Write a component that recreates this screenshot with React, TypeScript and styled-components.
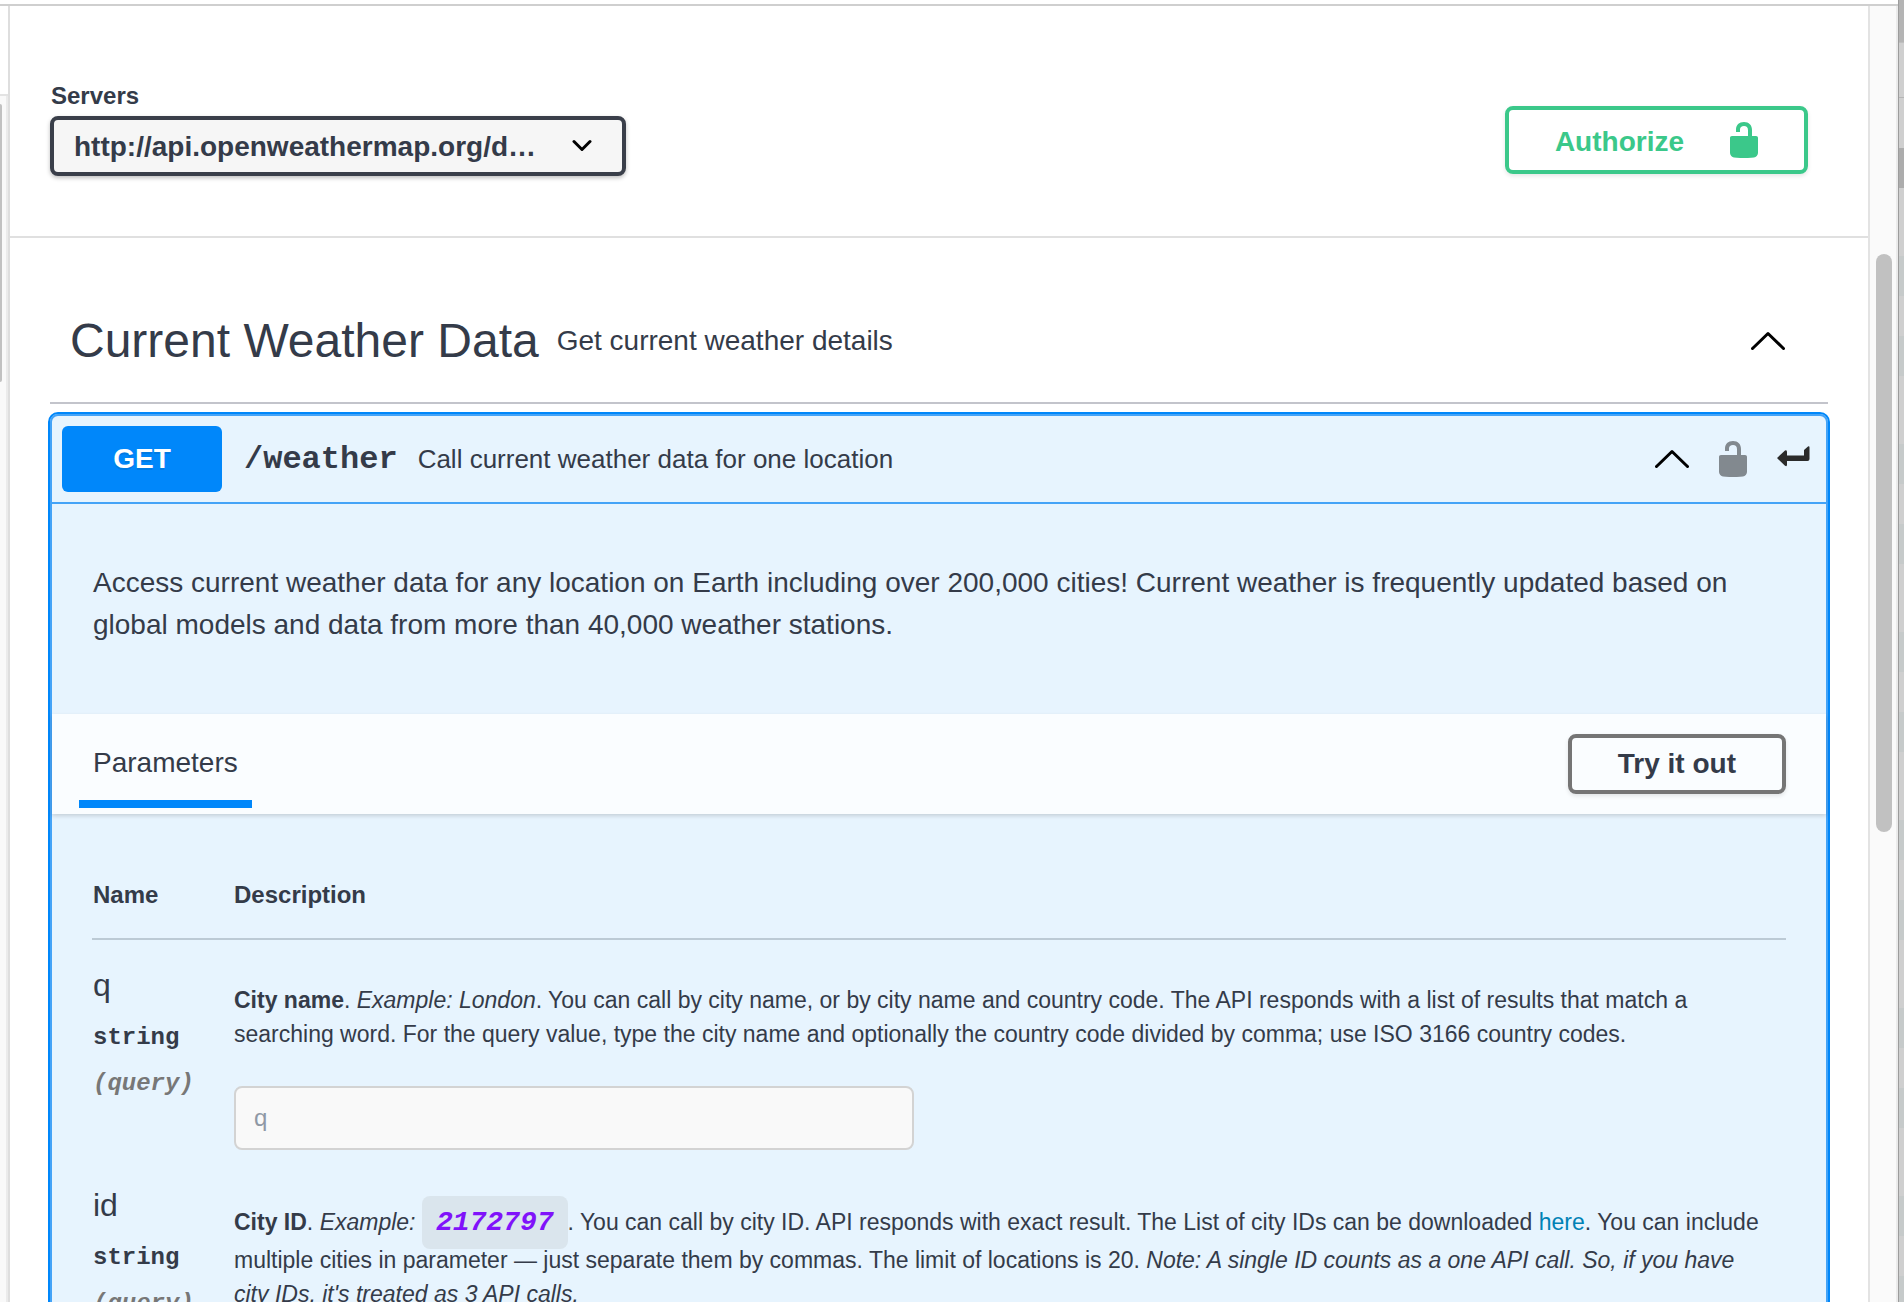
import React from "react";
import styled, { createGlobalStyle, css } from "styled-components";

const sans = `"Liberation Sans", Arial, Helvetica, sans-serif`;
const mono = `"Liberation Mono", "Courier New", monospace`;
const ink = "#343b49";
const blue = "#0087fa";
const green = "#3bc88a";

const GlobalStyle = createGlobalStyle`
  *, *::before, *::after { box-sizing: border-box; }
  html, body, #root { height: 100%; }
  body { margin: 0; overflow: hidden; background: #fff; color: ${ink}; font-family: ${sans}; }
`;

const Window = styled.div`
  display: grid;
  grid-template-columns: 1fr 6px;
  height: 100vh;
  overflow: hidden;
`;

const Browser = styled.div`
  display: flex;
  flex-direction: column;
  min-width: 0;
  min-height: 0;
`;

const TopEdge = styled.div`
  flex: none;
  height: 6px;
  border-bottom: 2px solid #cfcfcf;
`;

const Panes = styled.div`
  flex: 1;
  display: grid;
  grid-template-columns: 10px minmax(0, 1fr) 30px;
  min-height: 0;
`;

const SidePane = styled.div`
  display: flex;
  flex-direction: column;
  border-right: 2px solid #dedede;
`;

const SideHeader = styled.div`
  height: 90px;
  border-bottom: 2px solid #e3e3e3;
`;

const SideTrack = styled.div`
  flex: 1;
  padding-top: 8px;
  background: #f9f9f9;
  border-right: 2px solid #ebebeb;
`;

const SideThumb = styled.div`
  width: 2px;
  height: 278px;
  background: #c1c1c1;
  border-radius: 0 2px 2px 0;
`;

const Track = styled.div`
  padding: 248px 4px 0 6px;
  background: #fafafa;
  border-left: 2px solid #e3e3e3;
  border-right: 2px solid #ebebeb;
`;

const Thumb = styled.div`
  height: 578px;
  border-radius: 8px;
  background: #c1c1c1;
`;

const Backdrop = styled.div`
  border-left: 1px solid #9c9c9c;
  background:
    linear-gradient(#b4b4b4 0 42px, #bebebe 42px 43px, #cfcfcf 43px 97px, #b5b5b5 97px 98px, #cfcfcf 98px 148px, #acacac 148px 188px, transparent 188px),
    repeating-linear-gradient(#cfcfcf 0 28px, #cfcfcf 28px 68px, #c6caca 68px 108px, #cfcfcf 108px 148px, #c6caca 148px 188px);
`;

const Page = styled.main`
  min-width: 0;
  overflow: hidden;
`;

const Schemes = styled.section`
  display: flex;
  align-items: flex-start;
  justify-content: space-between;
  height: 232px;
  padding: 74px 60px 0 40px;
  border-bottom: 2px solid #e0e0e0;
`;

const ServerField = styled.div`
  display: flex;
  flex-direction: column;
  width: 576px;
`;

const ServerLabel = styled.label`
  margin-bottom: 4px;
  padding-left: 1px;
  font-size: 24px;
  font-weight: 700;
  line-height: 32px;
`;

const SelectBox = styled.div`
  display: grid;
  align-items: center;

  & > * { grid-area: 1 / 1; }
  & > svg { justify-self: end; margin-right: 34px; pointer-events: none; }
`;

const Select = styled.select`
  appearance: none;
  width: 100%;
  height: 60px;
  padding: 0 84px 0 20px;
  border: 4px solid #3a3f4a;
  border-radius: 8px;
  background: #f6f6f6;
  box-shadow: 0 2px 4px rgba(0, 0, 0, 0.25);
  color: ${ink};
  font: 700 28px ${sans};
  text-overflow: ellipsis;
`;

const Button = styled.button<{ $tone: "authorize" | "plain" }>`
  display: flex;
  align-items: center;
  justify-content: center;
  height: 60px;
  padding: 0 46px;
  border: 4px solid #757575;
  border-radius: 8px;
  background: transparent;
  box-shadow: 0 2px 4px rgba(0, 0, 0, 0.1);
  color: ${ink};
  font: 700 28px ${sans};
  ${(p) =>
    p.$tone === "authorize" &&
    css`
      gap: 46px;
      height: 68px;
      margin-top: 26px;
      border-color: ${green};
      color: ${green};
    `}
`;

const ButtonLabel = styled.span`
  padding-top: 4px;
`;

const Body = styled.section`
  padding: 54px 40px 0;
`;

const TagHeader = styled.header`
  display: flex;
  align-items: center;
  height: 112px;
  padding: 0 43px 12px 20px;
  border-bottom: 2px solid #c3c4cb;
`;

const TagTitle = styled.h2`
  margin: 0;
  font-size: 48px;
  font-weight: 400;
  line-height: 64px;
`;

const TagText = styled.p`
  flex: 1;
  margin: 0;
  padding-left: 18px;
  font-size: 28px;
  line-height: 42px;
`;

const IconButton = styled.button`
  display: flex;
  padding: 0;
  border: 0;
  background: none;
  color: inherit;
`;

const Operation = styled.article`
  margin: 8px -2px 0;
  padding: 2px;
  border: 2px solid ${blue};
  border-radius: 10px;
  background: #e7f4fe;
  box-shadow: inset 0 0 0 2px #44a3f7;
`;

const Summary = styled.div`
  display: flex;
  align-items: center;
  height: 88px;
  padding: 0 16px 0 10px;
  border-bottom: 2px solid #44a3f7;
`;

const Method = styled.span`
  width: 160px;
  border-radius: 6px;
  background: ${blue};
  color: #fff;
  font-size: 28px;
  font-weight: 700;
  line-height: 66px;
  text-align: center;
  text-shadow: 0 2px 0 rgba(0, 0, 0, 0.1);
`;

const Path = styled.span`
  padding: 0 20px 0 22px;
  font: 700 32px ${mono};
`;

const SummaryText = styled.span`
  flex: 1;
  font-size: 26px;
`;

const SummaryIcons = styled.div`
  display: flex;
  align-items: center;
  gap: 30px;
`;

const Description = styled.p`
  min-height: 210px;
  margin: 0;
  padding: 58px 40px 68px 41px;
  font-size: 28px;
  line-height: 42px;
`;

const TabBar = styled.div`
  display: flex;
  align-items: center;
  justify-content: space-between;
  height: 100px;
  padding: 0 40px 0 27px;
  background: #fafdff;
  box-shadow: 0 2px 4px rgba(0, 0, 0, 0.15);
`;

const Tab = styled.h4`
  align-self: flex-end;
  margin: 0 0 6px;
  padding: 0 14px 13px;
  border-bottom: 8px solid ${blue};
  font-size: 28px;
  font-weight: 400;
  line-height: 48px;
`;

const ParamArea = styled.div`
  padding: 40px;
`;

const Table = styled.table`
  width: 100%;
  border-collapse: separate;
  border-spacing: 0;
`;

const Th = styled.th<{ $narrow?: boolean }>`
  width: ${(p) => (p.$narrow ? "141px" : "auto")};
  height: 86px;
  padding: 0 0 2px 1px;
  border-bottom: 2px solid #bccad5;
  font-size: 24px;
  text-align: left;
`;

const Td = styled.td`
  padding: 21px 0 0 1px;
  vertical-align: top;
`;

const ParamName = styled.div`
  font-size: 32px;
  line-height: 48px;
`;

const ParamMeta = styled.div<{ $where?: boolean }>`
  padding-top: 12px;
  font: 700 24px / 34px ${mono};
  ${(p) => p.$where && css`color: #777; font-style: italic;`}
`;

const ParamText = styled.p`
  margin: 0;
  padding: 22px 16px 0 0;
  font-size: 23px;
  line-height: 34px;
`;

const ParamInput = styled.input`
  display: block;
  width: 680px;
  max-width: 100%;
  height: 64px;
  margin: 35px 0 10px;
  padding: 0 18px;
  border: 2px solid #d3d3d3;
  border-radius: 8px;
  background: #f9f9f9;
  color: ${ink};
  font: 24px ${sans};
  &::placeholder { color: #8f98a5; opacity: 1; }
`;

const Code = styled.code`
  padding: 11px 14px;
  border-radius: 8px;
  background: #dae5ed;
  color: #8012fa;
  font: italic 700 28px / 40px ${mono};
`;

const Link = styled.a`
  color: #0082b6;
  text-decoration: none;
`;

const Chevron = () => (
  <svg width="34" height="20" viewBox="0 0 34 20" fill="none" stroke="#000" strokeWidth="3" strokeLinecap="round" strokeLinejoin="round" aria-hidden="true">
    <path d="M1.5 17.5 17 2.5l15.500 15" />
  </svg>
);

const SmallChevron = () => (
  <svg width="20" height="14" viewBox="0 0 20 14" fill="none" stroke="#000" strokeWidth="3" strokeLinecap="round" strokeLinejoin="round" aria-hidden="true">
    <path d="M2 2.500 10 10.500l8-8" />
  </svg>
);

const Unlock = ({ color }: { color: string }) => (
  <svg width="28" height="36" viewBox="0 0 28 36" fill={color} aria-hidden="true">
    <path d="M18 14V8.200C18 5.200 16.500 4 14 4s-4 1.300-4 3.500V10H6V7.500C6 3 9 0 14 0s8 3 8 8v6h4c1.300 0 2 .7 2 2V31c0 2-2 4.200-4 4.600-5 .6-15 .6-20 0C2 35.200 0 33 0 31V16c0-1.300.7-2 2-2z" />
  </svg>
);

const ReturnArrow = () => (
  <svg width="33" height="27" viewBox="0 0 33 27" fill="#2b2b2b" aria-hidden="true">
    <path d="M0 12 8 4.500Q10 3.500 10 6v3.500h17V4L31 .500Q32.500-.2 32.500 1.500V13q0 2-2 2H10v3.500q0 2.500-2 1.200z" />
  </svg>
);

interface ParamProps {
  name: string;
  children: React.ReactNode;
}

const Param = ({ name, children }: ParamProps) => (
  <tr>
    <Td>
      <ParamName>{name}</ParamName>
      <ParamMeta>string</ParamMeta>
      <ParamMeta $where>(query)</ParamMeta>
    </Td>
    <Td>
      <ParamText>{children}</ParamText>
      <ParamInput placeholder={name} aria-label={name} />
    </Td>
  </tr>
);

export default function App() {
  return (
    <>
      <GlobalStyle />
      <Window>
        <Browser>
          <TopEdge />
          <Panes>
            <SidePane>
              <SideHeader />
              <SideTrack>
                <SideThumb />
              </SideTrack>
            </SidePane>
            <Page>
              <Schemes>
                <ServerField>
                  <ServerLabel htmlFor="server">Servers</ServerLabel>
                  <SelectBox>
                    <Select id="server">
                      <option>http://api.openweathermap.org/d…</option>
                    </Select>
                    <SmallChevron />
                  </SelectBox>
                </ServerField>
                <Button $tone="authorize">
                  <ButtonLabel>Authorize</ButtonLabel>
                  <Unlock color={green} />
                </Button>
              </Schemes>
              <Body>
                <TagHeader>
                  <TagTitle>Current Weather Data</TagTitle>
                  <TagText>Get current weather details</TagText>
                  <IconButton aria-label="Collapse section">
                    <Chevron />
                  </IconButton>
                </TagHeader>
                <Operation>
                  <Summary>
                    <Method>GET</Method>
                    <Path>/weather</Path>
                    <SummaryText>Call current weather data for one location</SummaryText>
                    <SummaryIcons>
                      <IconButton aria-label="Collapse operation">
                        <Chevron />
                      </IconButton>
                      <IconButton aria-label="Authorization">
                        <Unlock color="#82898f" />
                      </IconButton>
                      <IconButton aria-label="Jump to definition">
                        <ReturnArrow />
                      </IconButton>
                    </SummaryIcons>
                  </Summary>
                  <Description>
                    Access current weather data for any location on Earth including over 200,000 cities! Current weather is
                    frequently updated based on global models and data from more than 40,000 weather stations.
                  </Description>
                  <TabBar>
                    <Tab>Parameters</Tab>
                    <Button $tone="plain">Try it out</Button>
                  </TabBar>
                  <ParamArea>
                    <Table>
                      <thead>
                        <tr>
                          <Th $narrow>Name</Th>
                          <Th>Description</Th>
                        </tr>
                      </thead>
                      <tbody>
                        <Param name="q">
                          <b>City name</b>. <i>Example: London</i>. You can call by city name, or by city name and country
                          code. The API responds with a list of results that match a searching word. For the query value,
                          type the city name and optionally the country code divided by comma; use ISO 3166 country codes.
                        </Param>
                        <Param name="id">
                          <b>City ID</b>. <i>Example: <Code>2172797</Code></i>. You can call by city ID. API responds with
                          exact result. The List of city IDs can be downloaded <Link href="#">here</Link>. You can include
                          multiple cities in parameter — just separate them by commas. The limit of locations is 20.{" "}
                          <i>
                            Note: A single ID counts as a one API call. So, if you have city IDs, it's treated as 3 API
                            calls.
                          </i>
                        </Param>
                      </tbody>
                    </Table>
                  </ParamArea>
                </Operation>
              </Body>
            </Page>
            <Track>
              <Thumb />
            </Track>
          </Panes>
        </Browser>
        <Backdrop />
      </Window>
    </>
  );
}
